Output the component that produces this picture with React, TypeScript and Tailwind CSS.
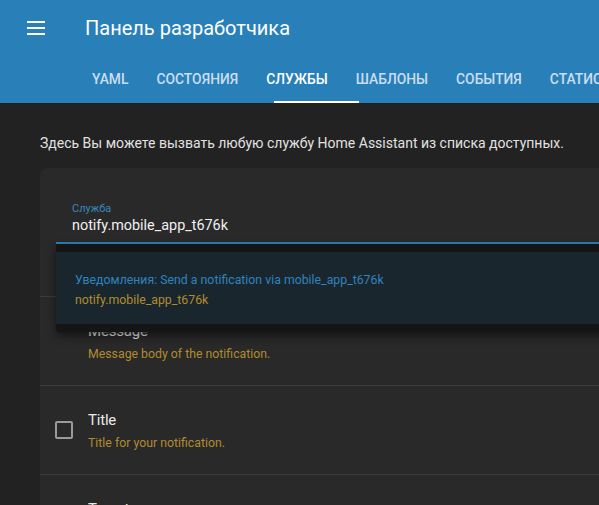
const tabs = ['YAML', 'Состояния', 'Службы', 'Шаблоны', 'События', 'Статистика'];

const Checkbox = () => (
  <div className="w-[18px] h-[18px] rounded-[2px] border-2 border-[#9a9a9a] shrink-0" />
);

const FieldRow = ({ title, desc, optional }: { title: string; desc: string; optional?: boolean }) => (
  <div className="h-[89px] border-t border-[#3c3c3c] flex items-center pl-[15px]">
    {optional ? <Checkbox /> : <div className="w-[18px] shrink-0" />}
    <div className="ml-[15px] pt-[4px] flex flex-col">
      <span className="text-[15px] tracking-[-0.2px] leading-[20px] text-[#e8e8e8]">{title}</span>
      <span className="mt-[2px] text-[12.3px] leading-[22px] text-[#b08c2e]">{desc}</span>
    </div>
  </div>
);

const App = () => {
  return (
    <div className="w-[599px] h-[505px] overflow-hidden bg-[#222222] font-['Roboto',sans-serif]">
      {/* Header */}
      <div className="bg-[#2980b9] h-[103px] flex flex-col">
        <div className="h-[55px] flex items-center pl-[27px]">
          <div className="flex flex-col gap-[4px] w-[18px]">
            <div className="h-[2px] bg-white" />
            <div className="h-[2px] bg-white" />
            <div className="h-[2px] bg-white" />
          </div>
          <h1 className="ml-[40px] text-[20px] text-white font-normal">Панель разработчика</h1>
        </div>
        <div className="h-[48px] flex pl-[78px] whitespace-nowrap">
          {tabs.map((t) => {
            const active = t === 'Службы';
            return (
              <div key={t} className="relative px-[14px] flex items-center shrink-0">
                <span
                  className={
                    active
                      ? 'text-[13.85px] font-medium uppercase text-white'
                      : 'text-[13.85px] font-medium uppercase text-[#c9def0]'
                  }
                >
                  {t}
                </span>
                {active && <div className="absolute bottom-0 left-[22px] w-[85px] h-[2px] bg-white" />}
              </div>
            );
          })}
        </div>
      </div>

      {/* Body */}
      <div className="pl-[40px]">
        <p className="pt-[30px] h-[65px] text-[14px] text-[#e1e1e1] whitespace-nowrap">
          Здесь Вы можете вызвать любую службу Home Assistant из списка доступных.
        </p>
        <div className="relative bg-[#292929] rounded-tl-[8px] w-[600px]">
          <div className="pl-[16px] pt-[16px]">
            <div className="h-[60px] border-b-2 border-[#2980b9] pl-[16px] pt-[18px]">
              <div className="text-[11px] leading-[13px] text-[#3a85bd]">Служба</div>
              <div className="text-[14.4px] leading-[22px] text-[#f0f0f0]">notify.mobile_app_t676k</div>
            </div>
          </div>
          <div className="h-[52px]" />
          <FieldRow title="Message" desc="Message body of the notification." />
          <FieldRow title="Title" desc="Title for your notification." optional />
          <FieldRow title="Target" desc="An array of targets to send the notification to." optional />

          {/* Autocomplete dropdown */}
          <div className="absolute left-[16px] top-[76px] w-[560px] bg-[#151515] py-[8px] rounded-b-[4px] shadow-[0_4px_8px_rgba(0,0,0,0.5)]">
            <div className="h-[72px] bg-[#1a262e] pl-[19px] pt-[3px] flex flex-col justify-center">
              <span className="text-[12.3px] leading-[20px] text-[#2f83bf]">
                Уведомления: Send a notification via mobile_app_t676k
              </span>
              <span className="text-[12.3px] leading-[20px] text-[#b08c2e]">notify.mobile_app_t676k</span>
            </div>
          </div>
        </div>
      </div>
    </div>
  );
};

export default App;
